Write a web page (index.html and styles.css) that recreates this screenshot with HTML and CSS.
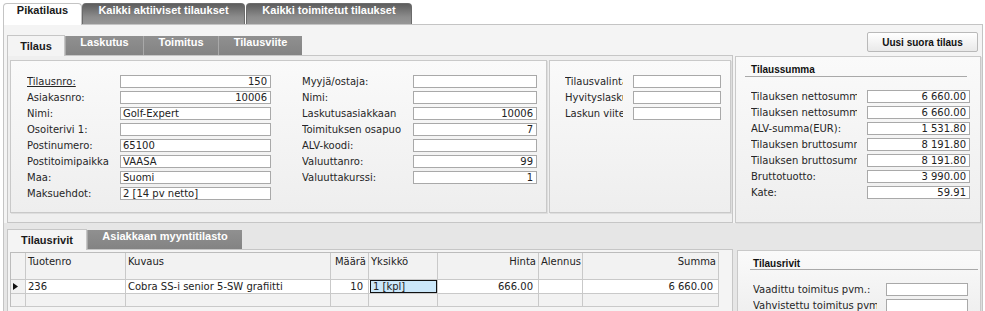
FILE: index.html
```html
<!DOCTYPE html>
<html lang="fi">
<head>
    <meta charset="UTF-8">
    <title>Pikatilaus</title>
    <link rel="stylesheet" href="styles.css">
</head>
<body>
    <div class="top-tabs">
        <div class="top-tab active w-pika">Pikatilaus</div>
        <div class="top-tab w-akt">Kaikki aktiiviset tilaukset</div>
        <div class="top-tab w-toim">Kaikki toimitetut tilaukset</div>
    </div>
    <div class="main">
        <div class="upper">
            <div class="order">
                <div class="sub-tabs">
                    <div class="sub-tab active w-tilaus">Tilaus</div>
                    <div class="sub-tab w-lask">Laskutus</div>
                    <div class="sub-tab w-toimitus">Toimitus</div>
                    <div class="sub-tab w-viite">Tilausviite</div>
                </div>
                <div class="order-body">
                    <div class="panel p1">
                        <div class="col c1">
                            <div class="field"><label class="link">Tilausnro:</label><input class="num" value="150"></div>
                            <div class="field"><label>Asiakasnro:</label><input class="num" value="10006"></div>
                            <div class="field"><label>Nimi:</label><input value="Golf-Expert"></div>
                            <div class="field"><label>Osoiterivi 1:</label><input value=""></div>
                            <div class="field"><label>Postinumero:</label><input value="65100"></div>
                            <div class="field"><label>Postitoimipaikka</label><input value="VAASA"></div>
                            <div class="field"><label>Maa:</label><input value="Suomi"></div>
                            <div class="field"><label>Maksuehdot:</label><input value="2 [14 pv netto]"></div>
                        </div>
                        <div class="col c2">
                            <div class="field"><label>Myyjä/ostaja:</label><input value=""></div>
                            <div class="field"><label>Nimi:</label><input value=""></div>
                            <div class="field"><label>Laskutusasiakkaan</label><input class="num" value="10006"></div>
                            <div class="field"><label>Toimituksen osapuoli</label><input class="num" value="7"></div>
                            <div class="field"><label>ALV-koodi:</label><input value=""></div>
                            <div class="field"><label>Valuuttanro:</label><input class="num" value="99"></div>
                            <div class="field"><label>Valuuttakurssi:</label><input class="num" value="1"></div>
                        </div>
                    </div>
                    <div class="panel p2">
                        <div class="field"><label>Tilausvalinta:</label><input value=""></div>
                        <div class="field"><label>Hyvityslasku:</label><input value=""></div>
                        <div class="field"><label>Laskun viite:</label><input value=""></div>
                    </div>
                </div>
            </div>
            <div class="side">
                <button class="btn">Uusi suora tilaus</button>
                <div class="panel sum">
                    <div class="panel-title">Tilaussumma</div>
                    <div class="rows-list">
                        <div class="field"><label>Tilauksen nettosumma:</label><input class="num" value="6 660.00"></div>
                        <div class="field"><label>Tilauksen nettosumma (EUR):</label><input class="num" value="6 660.00"></div>
                        <div class="field"><label>ALV-summa(EUR):</label><input class="num" value="1 531.80"></div>
                        <div class="field"><label>Tilauksen bruttosumma:</label><input class="num" value="8 191.80"></div>
                        <div class="field"><label>Tilauksen bruttosumma (EUR):</label><input class="num" value="8 191.80"></div>
                        <div class="field"><label>Bruttotuotto:</label><input class="num" value="3 990.00"></div>
                        <div class="field"><label>Kate:</label><input class="num" value="59.91"></div>
                    </div>
                </div>
            </div>
        </div>
        <div class="lower">
            <div class="rows">
                <div class="sub-tabs">
                    <div class="sub-tab active w-rivit">Tilausrivit</div>
                    <div class="sub-tab w-tilasto">Asiakkaan myyntitilasto</div>
                </div>
                <div class="rows-body">
                    <div class="grid">
                        <div class="hd"></div>
                        <div class="hd">Tuotenro</div>
                        <div class="hd">Kuvaus</div>
                        <div class="hd right">Määrä</div>
                        <div class="hd">Yksikkö</div>
                        <div class="hd right">Hinta</div>
                        <div class="hd">Alennus</div>
                        <div class="hd right">Summa</div>

                        <div class="rh"><svg width="5" height="7" viewBox="0 0 5 7"><polygon points="0,0 5,3.5 0,7" fill="#111"/></svg></div>
                        <div class="cell">236</div>
                        <div class="cell">Cobra SS-i senior 5-SW grafiitti</div>
                        <div class="cell num">10</div>
                        <div class="cell sel"><span>1 [kpl]</span></div>
                        <div class="cell num">666.00</div>
                        <div class="cell"></div>
                        <div class="cell num">6 660.00</div>

                        <div class="empty"></div>
                        <div class="empty"></div>
                        <div class="empty"></div>
                        <div class="empty"></div>
                        <div class="empty"></div>
                        <div class="empty"></div>
                        <div class="empty"></div>
                        <div class="empty"></div>
                    </div>
                </div>
            </div>
            <div class="panel line-panel">
                <div class="panel-title">Tilausrivit</div>
                <div class="rows-list">
                    <div class="field"><label>Vaadittu toimitus pvm.:</label><input value=""></div>
                    <div class="field"><label>Vahvistettu toimitus pvm.:</label><input value=""></div>
                </div>
            </div>
        </div>
    </div>
</body>
</html>
```

FILE: styles.css
```css
* {
    box-sizing: border-box;
}
body {
    margin: 0;
    background: #fff;
    font-family: "DejaVu Sans", Verdana, sans-serif;
    font-size: 10px;
    color: #262626;
    overflow: hidden;
}

/* tabs */
.top-tabs {
    display: flex;
    height: 21px;
    margin: 3px 0 0 3px;
}
.top-tab {
    height: 21px;
    line-height: 20px;
    text-align: center;
    font: bold 11px "Liberation Sans", Arial, sans-serif;
    color: #fff;
    background: linear-gradient(#5e5e5e, #8c8c8c 65%, #979797);
    border: 1px solid #6b6b6b;
    border-bottom: 0;
    border-radius: 4px 4px 0 0;
}
.top-tab.active {
    height: 22px;
    background: #fff;
    color: #1a1a1a;
    border-color: #c4c4c4;
    position: relative;
    z-index: 1;
}
.w-pika { width: 79px; }
.w-akt { width: 163px; }
.w-toim { width: 166px; margin-left: 1px; }

.sub-tabs {
    display: flex;
    height: 20px;
}
.sub-tab {
    height: 19px;
    margin-top: 1px;
    line-height: 19px;
    text-align: center;
    font: bold 11px "Liberation Sans", Arial, sans-serif;
    color: #fff;
    background: linear-gradient(#909090, #838383);
}
.sub-tab + .sub-tab {
    border-left: 1px solid #a9a9a9;
}
.sub-tab.active {
    height: 21px;
    margin-top: 0;
    line-height: 20px;
    background: #f4f4f4;
    color: #1a1a1a;
    border: 1px solid #c6c6c6;
    border-bottom: 0;
    position: relative;
    z-index: 1;
}
.w-tilaus { width: 58px; }
.w-lask { width: 78px; }
.w-toimitus { width: 75px; }
.w-viite { width: 84px; }
.w-rivit { width: 80px; }
.w-tilasto { width: 155px; }

/* layout */
.main {
    margin-left: 3px;
    width: 980px;
    height: 300px;
    border: 1px solid #c4c4c4;
    background: #e6e6e6;
}
.upper {
    display: flex;
    height: 198px;
    padding: 7px 1px 0 3px;
    background: #f4f4f4;
}
.order {
    width: 726px;
}
.order .sub-tabs {
    margin-top: 3px;
}
.order-body {
    display: flex;
    gap: 2px;
    height: 168px;
    padding: 4px 1px 0 2px;
    border: 1px solid #c6c6c6;
    background: #efefef;
}
.panel {
    border: 1px solid #c9c9c9;
    background: linear-gradient(#fafafa, #eeeeee);
    box-shadow: 1px 1px 0 #dedede;
}
.p1 {
    display: flex;
    gap: 31px;
    width: 537px;
    height: 153px;
    padding: 14px 0 0 16px;
}
.p2 {
    width: 182px;
    height: 153px;
    padding: 14px 0 0 15px;
}
.side {
    display: flex;
    flex-direction: column;
    width: 246px;
    margin-left: 2px;
}
.btn {
    align-self: flex-end;
    width: 111px;
    height: 20px;
    margin: 0 3px 4px 0;
    padding: 0;
    font: bold 10px "Liberation Sans", Arial, sans-serif;
    color: #111;
    background: linear-gradient(#ffffff, #e9e9e9);
    border: 1px solid #b9b9b9;
    border-radius: 2px;
}
.sum {
    height: 167px;
    padding: 7px 13px 0 9px;
}
.panel-title {
    padding: 0 0 1px 6px;
    line-height: 12px;
    font: bold 10px "Liberation Sans", Arial, sans-serif;
    color: #111;
    border-bottom: 1px solid #a9a9a9;
}
.rows-list {
    margin-top: 13px;
    padding-left: 6px;
}

/* form fields */
.field {
    display: flex;
    height: 13px;
    margin-bottom: 3px;
}
.field label {
    flex-shrink: 0;
    line-height: 13px;
    white-space: nowrap;
    overflow: hidden;
}
.field input {
    flex-shrink: 0;
    height: 13px;
    margin: 0;
    padding: 0 3px 0 2px;
    border: 1px solid #a9a9a9;
    background: #fff;
    font: inherit;
    color: #222;
    outline: none;
}
.field input.num {
    text-align: right;
}
.link {
    text-decoration: underline;
}
.c1 label { width: 88px; margin-right: 5px; }
.c1 input { width: 151px; }
.c2 label { width: 99px; margin-right: 12px; }
.c2 input { width: 124px; }
.p2 label { width: 58px; margin-right: 10px; }
.p2 input { width: 88px; }
.sum label { width: 106px; margin-right: 10px; }
.sum input { width: 103px; }
.line-panel label { width: 124px; margin-right: 9px; }
.line-panel input { width: 82px; }

/* lower part */
.lower {
    display: flex;
    padding: 6px 0 0 3px;
}
.rows {
    width: 726px;
}
.rows-body {
    height: 70px;
    padding: 2px 0 0 2px;
    border: 1px solid #c6c6c6;
    background: #f4f4f4;
}
.line-panel {
    width: 244px;
    height: 70px;
    margin: 21px 0 0 4px;
    padding: 7px 2px 0 12px;
}
.line-panel .panel-title {
    padding: 0 0 0 3px;
}
.line-panel .rows-list {
    padding-left: 3px;
}

/* grid */
.grid {
    display: grid;
    grid-template-columns: 15px 100px 205px 38px 69px 101px 44px 136px;
    grid-template-rows: 27px 14px 13px;
    width: 709px;
    border-top: 1px solid #bcbcbc;
    border-left: 1px solid #bcbcbc;
}
.grid > div {
    border-right: 1px solid #c9c9c9;
    border-bottom: 1px solid #c9c9c9;
    padding: 0 2px;
    line-height: 13px;
    white-space: nowrap;
    overflow: hidden;
    color: #222;
}
.grid .hd {
    padding-top: 2px;
    background: #f2f2f2;
}
.grid .right {
    text-align: right;
}
.grid .cell {
    background: #fff;
}
.grid .num {
    text-align: right;
    padding-right: 5px;
}
.grid .rh {
    display: flex;
    align-items: center;
    background: #f2f2f2;
}
.grid .empty {
    background: #f2f2f2;
}
.grid .sel {
    padding: 0 0 0 1px;
}
.sel span {
    display: block;
    height: 13px;
    padding-left: 2px;
    line-height: 12px;
    border: 1px solid #111;
    background: #cbe7f9;
}
```
